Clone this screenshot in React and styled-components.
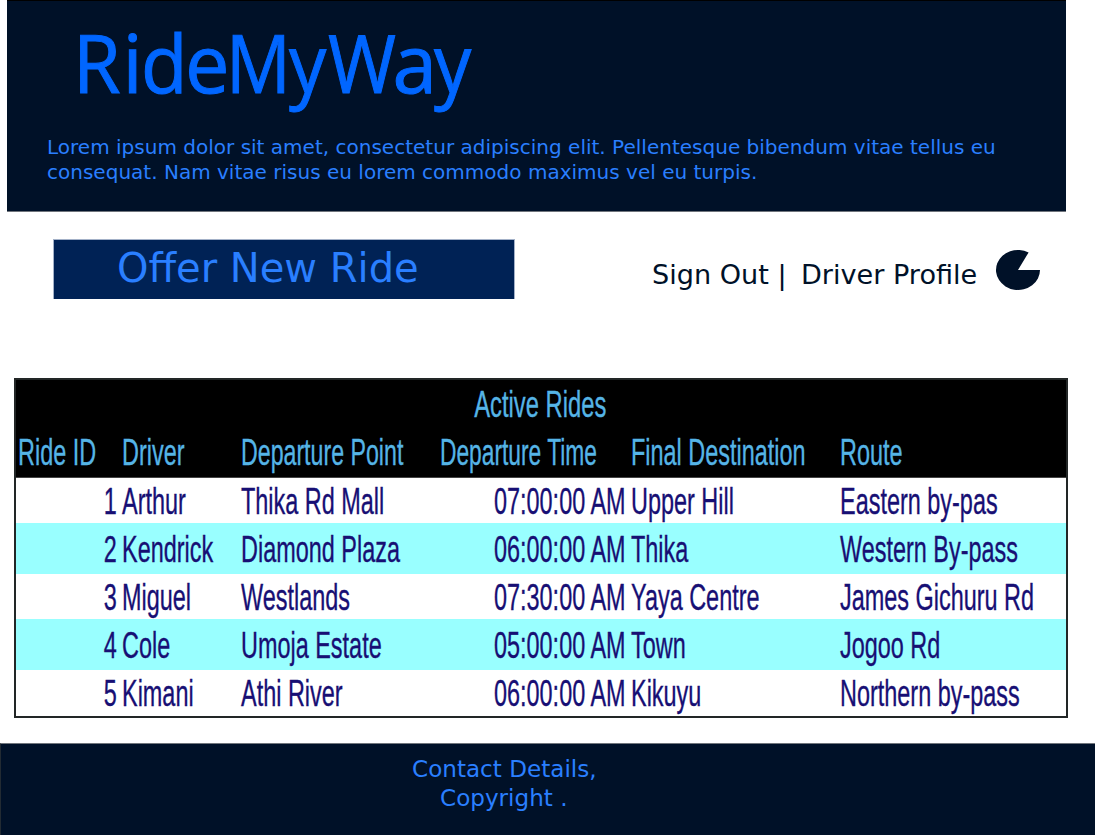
import React from "react";
import styled, { createGlobalStyle } from "styled-components";

const GlobalStyle = createGlobalStyle`
  * { box-sizing: border-box; }
  body {
    margin: 0;
    background: #fff;
    font-family: "DejaVu Sans", sans-serif;
    overflow: hidden;
  }
`;

const Page = styled.div`
  width: 1096px;
  height: 836px;
  display: flex;
  flex-direction: column;
`;

const Header = styled.header`
  margin-left: 7px;
  width: 1059px;
  height: 212px;
  background: #001128;
  border-top: 1px solid #000;
  border-bottom: 1px solid #70757c;
  padding: 20px 0 0 40px;
`;

const Logo = styled.h1`
  display: flex;
  margin: 0;
  padding-left: 25.8px;
  height: 114px;
  font: 400 80px/81px "Open Sans", sans-serif;
  color: #0066ff;
  -webkit-text-stroke: 1px #0066ff;
  white-space: nowrap;
`;

const Letter = styled.span`
  flex: none;
  width: ${(p) => p.$advance}px;
  transform-origin: left;
  transform: scaleX(${(p) => p.$stretch});
`;

const Intro = styled.p`
  margin: 0;
  font-size: 20px;
  line-height: 25px;
  letter-spacing: 0.01px;
  color: #2a7fff;
  white-space: nowrap;
`;

const ActionBar = styled.div`
  display: flex;
  align-items: flex-start;
  height: 166px;
  padding: 27px 0 0 53px;
`;

const OfferButton = styled.button`
  width: 462px;
  height: 60px;
  border: 1px solid #a3b1c8;
  border-bottom: 0;
  padding: 0 0 2px 63px;
  background: #002255;
  color: #2a7fff;
  font: 40px/57px "DejaVu Sans", sans-serif;
  text-align: left;
`;

const Account = styled.nav`
  display: flex;
  margin-left: 137px;
  padding-top: 10px;
  color: #001128;
  font-size: 27.1px;
  line-height: 52px;
  white-space: nowrap;
`;

const AccountLink = styled.span`
  width: ${(p) => p.$width}px;
`;

const Avatar = styled.svg`
  width: 46px;
  height: 42px;
`;

const Table = styled.section`
  margin-left: 14px;
  width: 1054px;
  height: 340px;
  border: 2px solid #222626;
  font: 37.5px/44px "Liberation Sans", sans-serif;
  color: #170f74;
`;

const TableHead = styled.div`
  height: 98px;
  background: #000;
  color: #55b4e6;
  border-bottom: 1px solid #444;
`;

const Row = styled.div`
  display: grid;
  grid-template-columns: 104px 119px 199px 191px 209px 228px;
  align-items: center;
  height: ${(p) => p.$height}px;
  background: ${(p) => (p.$tinted ? "#99ffff" : "transparent")};
`;

const Title = styled.div`
  display: flex;
  justify-content: center;
  align-items: center;
  height: 48px;
  padding-right: 1px;
`;

const Cell = styled.div`
  display: flex;
  justify-content: ${(p) => (p.$right ? "flex-end" : "flex-start")};
  padding: 0 3px 0 2px;
  min-width: 0;
`;

const Condensed = styled.span`
  flex: none;
  white-space: nowrap;
  -webkit-text-stroke: 0.35px currentColor;
  transform: scaleX(${(p) => p.$stretch || 0.625});
  transform-origin: ${(p) => p.$origin || "left"};
`;

const Footer = styled.footer`
  margin-top: 25px;
  width: 1095px;
  height: 92px;
  background: #001128;
  border-top: 1px solid #70757c;
  border-left: 1px solid #222b33;
  padding: 11px 0 0 411px;
  color: #2a7fff;
  font-size: 23.1px;
  line-height: 29px;
`;

const FooterLine = styled.div`
  padding-left: ${(p) => p.$indent || 0}px;
`;

const logoLetters = [
  ["R", 49.8, 0.966],
  ["i", 18.3, 1],
  ["d", 44.4, 0.95],
  ["e", 41.2, 0.99],
  ["M", 63, 0.9],
  ["y", 38.5, 0.93],
  ["W", 64.5, 0.92],
  ["a", 41.8, 1],
  ["y", 40, 0.93],
];

const columns = [
  { name: "Ride ID" },
  { name: "Driver" },
  { name: "Departure Point", stretch: 0.618 },
  { name: "Departure Time", stretch: 0.607 },
  { name: "Final Destination" },
  { name: "Route" },
];

const rides = [
  { height: 45, cells: ["1", "Arthur", "Thika Rd Mall", "07:00:00 AM", "Upper Hill", "Eastern by-pas"] },
  { height: 51, cells: ["2", "Kendrick", "Diamond Plaza", "06:00:00 AM", "Thika", "Western By-pass"] },
  { height: 45, cells: ["3", "Miguel", "Westlands", "07:30:00 AM", "Yaya Centre", "James Gichuru Rd"] },
  { height: 51, cells: ["4", "Cole", "Umoja Estate", "05:00:00 AM", "Town", "Jogoo Rd"] },
  { height: 45, cells: ["5", "Kimani", "Athi River", "06:00:00 AM", "Kikuyu", "Northern by-pass"] },
];

const isNumeric = (column) => column === 0 || column === 3;

export default function App() {
  return (
    <>
      <GlobalStyle />
      <Page>
        <Header>
          <Logo>
            {logoLetters.map(([letter, advance, stretch], i) => (
              <Letter key={i} $advance={advance} $stretch={stretch}>
                {letter}
              </Letter>
            ))}
          </Logo>
          <Intro>Lorem ipsum dolor sit amet, consectetur adipiscing elit. Pellentesque bibendum vitae tellus eu</Intro>
          <Intro>consequat. Nam vitae risus eu lorem commodo maximus vel eu turpis.</Intro>
        </Header>
        <ActionBar>
          <OfferButton>Offer New Ride</OfferButton>
          <Account>
            <AccountLink $width={149}>Sign Out |</AccountLink>
            <AccountLink $width={194}>Driver Profile</AccountLink>
            <Avatar viewBox="0 0 46 42">
              <path d="M23 21H45A22 20 0 1 1 33.6 3.4Z" fill="#001128" />
            </Avatar>
          </Account>
        </ActionBar>
        <Table>
          <TableHead>
            <Title>
              <Condensed $origin="center" $stretch={0.634}>Active Rides</Condensed>
            </Title>
            <Row $height={48}>
              {columns.map(({ name, stretch }) => (
                <Cell key={name}>
                  <Condensed $stretch={stretch}>{name}</Condensed>
                </Cell>
              ))}
            </Row>
          </TableHead>
          {rides.map((ride, i) => (
            <Row key={i} $height={ride.height} $tinted={i % 2 === 1}>
              {ride.cells.map((value, c) => (
                <Cell key={c} $right={isNumeric(c)}>
                  <Condensed $origin={isNumeric(c) ? "right" : "left"}>{value}</Condensed>
                </Cell>
              ))}
            </Row>
          ))}
        </Table>
        <Footer>
          <FooterLine>Contact Details,</FooterLine>
          <FooterLine $indent={28}>Copyright .</FooterLine>
        </Footer>
      </Page>
    </>
  );
}
